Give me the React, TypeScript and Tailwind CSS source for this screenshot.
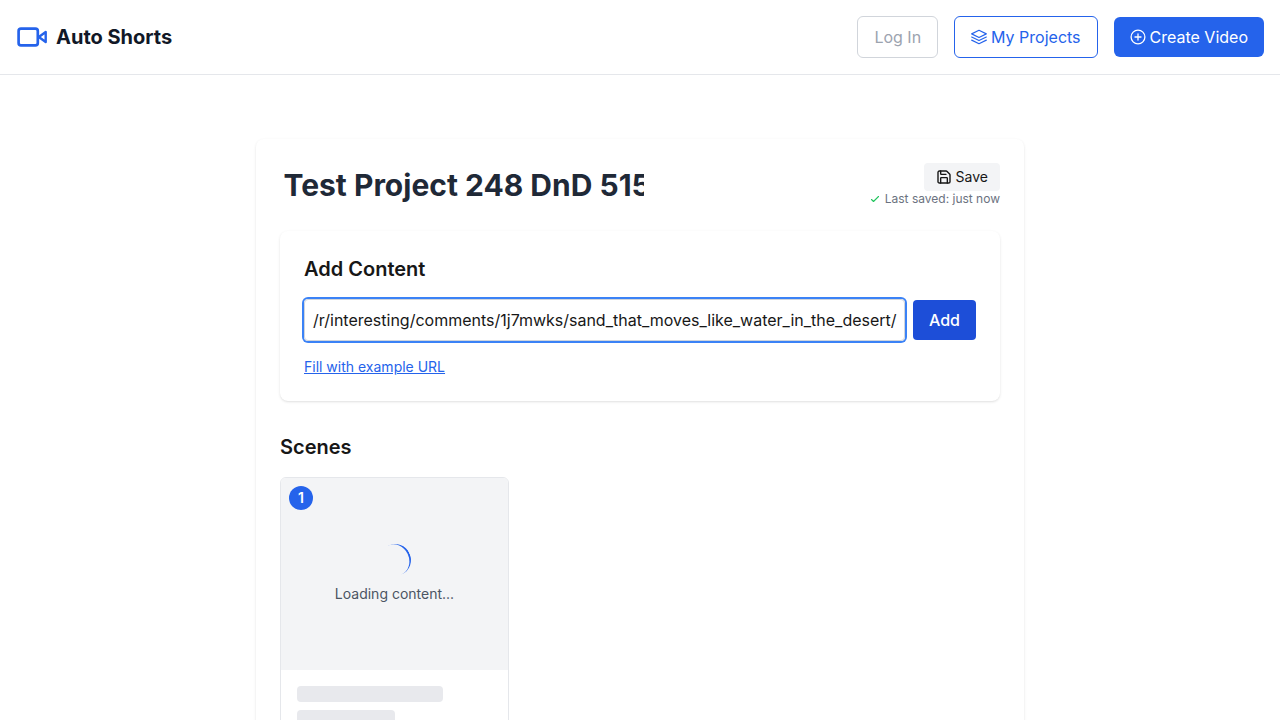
import React from "react";

function VideoIcon() {
  return (
    <svg className="h-8 w-8 text-[#2563eb]" viewBox="0 0 32 32" fill="none" stroke="currentColor" strokeWidth="2.67" strokeLinecap="round" strokeLinejoin="round">
      <rect x="2.6" y="7.7" width="19.2" height="16.7" rx="2.4" />
      <path d="M22.8 16l6.9-5v10z" strokeWidth="2.4" />
    </svg>
  );
}

function LayersIcon() {
  return (
    <svg className="h-4 w-4" viewBox="0 0 24 24" fill="none" stroke="currentColor" strokeWidth="1.7" strokeLinecap="round" strokeLinejoin="round">
      <path d="M12 1.9 23 7.3 12 12.7 1 7.3z" />
      <path d="M1 12l11 5.4L23 12" />
      <path d="M1 16.7l11 5.4 11-5.4" />
    </svg>
  );
}

function PlusCircleIcon() {
  return (
    <svg className="h-4 w-4" viewBox="0 0 16 16" fill="none" stroke="currentColor" strokeWidth="1.3">
      <circle cx="8" cy="8" r="6.9" />
      <path d="M8 5v6M5 8h6" strokeLinecap="round" />
    </svg>
  );
}

function SaveIcon() {
  return (
    <svg className="h-4 w-4" viewBox="0 0 24 24" fill="none" stroke="currentColor" strokeWidth="2.1" strokeLinecap="round" strokeLinejoin="round">
      <path d="M15.2 3a2 2 0 0 1 1.4.6l3.8 3.8a2 2 0 0 1 .6 1.4V19a2 2 0 0 1-2 2H5a2 2 0 0 1-2-2V5a2 2 0 0 1 2-2z" />
      <path d="M17 21v-7a1 1 0 0 0-1-1H8a1 1 0 0 0-1 1v7" />
      <path d="M7 3v4a1 1 0 0 0 1 1h7" />
    </svg>
  );
}

function Header() {
  return (
    <header className="flex h-[75px] items-center justify-between border-b border-[#e5e7eb] bg-white px-4">
      <div className="flex items-center gap-2">
        <VideoIcon />
        <span className="text-xl font-bold text-[#111827]">Auto Shorts</span>
      </div>
      <nav className="flex items-center gap-4">
        <button className="h-[42px] rounded-md border border-[#d1d5db] px-4 text-[#9ca3af]">Log In</button>
        <button className="flex h-[42px] items-center gap-1 rounded-md border border-[#2563eb] px-4 text-[#2563eb]">
          <LayersIcon />
          My Projects
        </button>
        <button className="flex h-10 items-center gap-1 rounded-md bg-[#2563eb] px-4 text-white">
          <PlusCircleIcon />
          Create Video
        </button>
      </nav>
    </header>
  );
}

function SceneCard() {
  return (
    <article className="h-[320px] w-[229px] overflow-hidden rounded-md border border-[#e5e7eb] bg-white">
      <div className="relative flex h-48 flex-col items-center justify-center bg-[#f3f4f6]">
        <span className="absolute top-2 left-2 flex h-6 w-6 items-center justify-center rounded-full bg-[#2563eb] text-sm font-semibold text-white">1</span>
        <div className="mb-2 h-8 w-8 rotate-[65deg] rounded-full border-t-2 border-[#2563eb]" />
        <p className="text-sm text-[#4b5563]">Loading content...</p>
      </div>
      <div className="flex flex-col gap-2 p-4">
        <div className="h-4 w-3/4 rounded-sm bg-[#e8e9ed]" />
        <div className="h-4 w-1/2 rounded-sm bg-[#e8e9ed]" />
      </div>
    </article>
  );
}

export default function App() {
  return (
    <div className="h-screen overflow-hidden bg-white font-['Inter',sans-serif] text-[#171717]">
      <Header />
      <main className="mx-auto mt-16 h-[800px] w-3xl rounded-lg bg-white p-6 shadow-sm">
        <div className="mb-6 flex h-11 items-start justify-between">
          <input readOnly defaultValue="Test Project 248 DnD 51543" className="h-11 w-[368px] pr-1 pl-[3.5px] text-3xl font-bold text-[#1f2937] outline-none" />
          <div className="flex flex-col items-end">
            <button className="flex h-7 items-center gap-1 rounded-sm bg-[#f3f4f6] px-3 text-sm">
              <SaveIcon />
              Save
            </button>
            <p className="flex h-4 items-center gap-1 text-xs text-[#6b7280]">
              <svg className="h-3 w-3 text-[#22c55e]" viewBox="0 0 24 24" fill="none" stroke="currentColor" strokeWidth="2.2" strokeLinecap="round" strokeLinejoin="round">
                <path d="M5 13l4 4L19 7" />
              </svg>
              Last saved: just now
            </p>
          </div>
        </div>

        <section className="mb-8 h-[170px] rounded-lg bg-white p-6 shadow-sm">
          <h2 className="mb-4 text-xl font-semibold">Add Content</h2>
          <div className="flex items-center gap-2">
            <div className="flex h-[42px] w-[601px] items-center overflow-hidden rounded-sm border border-[#d1d5db] px-2 whitespace-nowrap ring-2 ring-[#3b82f6]">
              /r/interesting/comments/1j7mwks/sand_that_moves_like_water_in_the_desert/
            </div>
            <button className="h-10 rounded-sm bg-[#1d4ed8] px-4 font-medium text-white">Add</button>
          </div>
          <a className="mt-4 block text-sm text-[#2563eb] underline">Fill with example URL</a>
        </section>

        <section>
          <h2 className="mb-4 text-xl font-semibold">Scenes</h2>
          <SceneCard />
        </section>
      </main>
    </div>
  );
}
